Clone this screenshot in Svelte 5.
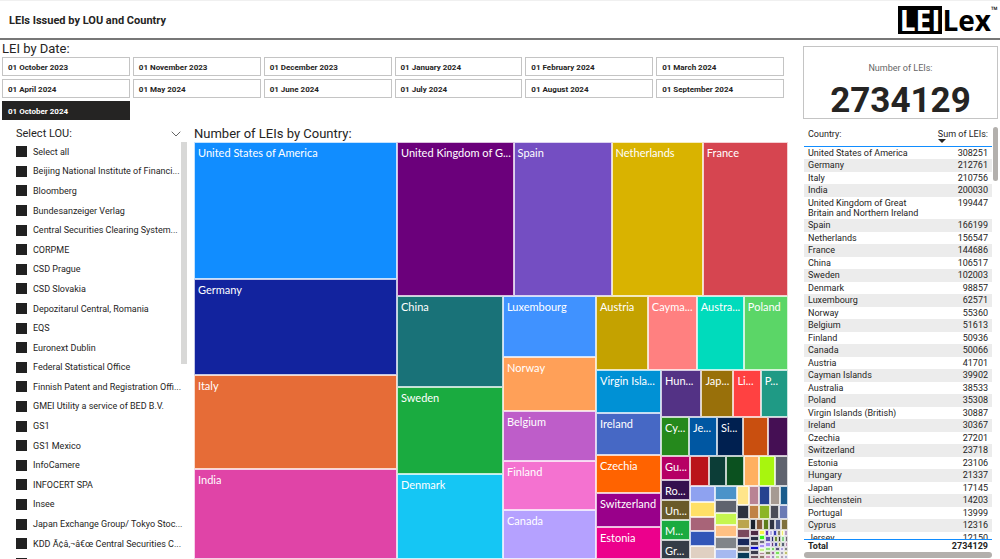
<script>
    const dates = [
        "01 October 2023",
        "01 November 2023",
        "01 December 2023",
        "01 January 2024",
        "01 February 2024",
        "01 March 2024",
        "01 April 2024",
        "01 May 2024",
        "01 June 2024",
        "01 July 2024",
        "01 August 2024",
        "01 September 2024",
        "01 October 2024",
    ];
    let selectedDate = $state("01 October 2024");

    const lous = [
        "Select all",
        "Beijing National Institute of Financi...",
        "Bloomberg",
        "Bundesanzeiger Verlag",
        "Central Securities Clearing System...",
        "CORPME",
        "CSD Prague",
        "CSD Slovakia",
        "Depozitarul Central, Romania",
        "EQS",
        "Euronext Dublin",
        "Federal Statistical Office",
        "Finnish Patent and Registration Offi...",
        "GMEI Utility a service of BED B.V.",
        "GS1",
        "GS1 Mexico",
        "InfoCamere",
        "INFOCERT SPA",
        "Insee",
        "Japan Exchange Group/ Tokyo Stoc...",
        "KDD Ã¢â‚¬â€œ Central Securities C...",
        "",
    ];

    const countries = [
        ["United States of America", 308251],
        ["Germany", 212761],
        ["Italy", 210756],
        ["India", 200030],
        ["United Kingdom of Great Britain and Northern Ireland", 199447],
        ["Spain", 166199],
        ["Netherlands", 156547],
        ["France", 144686],
        ["China", 106517],
        ["Sweden", 102003],
        ["Denmark", 98857],
        ["Luxembourg", 62571],
        ["Norway", 55360],
        ["Belgium", 51613],
        ["Finland", 50936],
        ["Canada", 50066],
        ["Austria", 41701],
        ["Cayman Islands", 39902],
        ["Australia", 38533],
        ["Poland", 35308],
        ["Virgin Islands (British)", 30887],
        ["Ireland", 30367],
        ["Czechia", 27201],
        ["Switzerland", 23718],
        ["Estonia", 23106],
        ["Hungary", 21337],
        ["Japan", 17145],
        ["Liechtenstein", 14203],
        ["Portugal", 13999],
        ["Cyprus", 12316],
        ["Jersey", 12150],
    ];

    // treemap nodes: a tile has a colour, rows and columns have children
    const tile = (size, color, name = "") => ({ size, color, name });
    const row = (size, ...children) => ({ size, dir: "row", children });
    const col = (size, ...children) => ({ size, dir: "column", children });

    // unlabelled strips, written as "size colour" pairs
    const strip = (list) =>
        list.split(", ").map((s) => {
            const [size, color] = s.split(" ");
            return tile(+size, color);
        });

    const smallest = col(
        38,
        row(11, ...strip("6 #1a222e, 7 #855b3a, 6 #5d7e1a, 6 #2e3444, 6 #4b5a87, 7 #80713c")),
        row(
            28,
            col(9, ...strip("6 #4d2b44, 5 #2a3145, 5 #4f4852, 4 #0b0bcf, 4 #3b3b4c, 4 #6d5560")),
            col(6, ...strip("5 #f7f34a, 5 #3cf51c, 4 #6f6a80, 4 #a78cf5, 4 #c3f08a, 3 #b08898, 3 #8f7a6a")),
            col(
                23,
                row(6, ...strip("4 #5a2fb0, 4 #b9b4e8, 4 #3a3fb0, 4 #8f8b6a, 3 #f0ee70, 4 #b09ac0")),
                row(
                    22,
                    col(6, ...strip("6 #5b4fa8, 5 #a58cf0, 4 #92e07a, 4 #7b8a5a, 3 #d09ab8")),
                    col(
                        17,
                        row(5, ...strip("3 #22246a, 3 #6d8a3a, 3 #2c2c34, 3 #8ad08a, 3 #6a6270")),
                        row(5, ...strip("3 #5f3a78, 3 #444c9a, 3 #9a9a4a, 3 #556070, 3 #b088a8")),
                        row(4, ...strip("4 #7ad06a, 4 #5a507a, 4 #b0a0e0, 4 #808080")),
                        row(4, ...strip("4 #9a6a9a, 4 #7ae05a, 4 #a0a0b0, 4 #c0c070")),
                        row(4, ...strip("4 #a090c0, 4 #b0e090, 4 #b0a0b0, 4 #b0b0d0")),
                    ),
                ),
            ),
        ),
    );

    const treemap = row(
        1,
        col(
            203,
            tile(138, "#118dff", "United States of America"),
            tile(95, "#12239e", "Germany"),
            tile(94, "#e66c37", "Italy"),
            tile(90, "#e044a7", "India"),
        ),
        col(
            391,
            row(
                154,
                tile(117, "#6b007b", "United Kingdom of G..."),
                tile(98, "#744ec2", "Spain"),
                tile(91, "#d9b300", "Netherlands"),
                tile(85, "#d64550", "France"),
            ),
            row(
                263,
                col(
                    106,
                    tile(91, "#197278", "China"),
                    tile(87, "#1aab40", "Sweden"),
                    tile(85, "#15c6f4", "Denmark"),
                ),
                col(
                    93,
                    tile(61, "#4092ff", "Luxembourg"),
                    tile(54, "#ffa058", "Norway"),
                    tile(50, "#be5dc9", "Belgium"),
                    tile(49, "#f472d0", "Finland"),
                    tile(49, "#b5a1ff", "Canada"),
                ),
                col(
                    192,
                    row(
                        74,
                        tile(52, "#c4a200", "Austria"),
                        tile(49, "#ff8080", "Cayma..."),
                        tile(47, "#00dbbc", "Austra..."),
                        tile(44, "#5bd667", "Poland"),
                    ),
                    row(
                        189,
                        col(
                            65,
                            tile(43, "#0091d5", "Virgin Isla..."),
                            tile(43, "#4668c5", "Ireland"),
                            tile(38, "#ff6300", "Czechia"),
                            tile(33, "#99008a", "Switzerland"),
                            tile(32, "#ec008c", "Estonia"),
                        ),
                        col(
                            127,
                            row(
                                47,
                                tile(41, "#533285", "Hun..."),
                                tile(32, "#99700a", "Jap..."),
                                tile(27, "#ff4141", "Li..."),
                                tile(27, "#1f9a85", "P..."),
                            ),
                            row(
                                39,
                                tile(28, "#25891c", "Cy..."),
                                tile(28, "#0057a2", "Je..."),
                                tile(26, "#002050", "Si..."),
                                tile(25, "#c94f0f"),
                                tile(19, "#450f54"),
                            ),
                            row(
                                103,
                                col(
                                    29,
                                    tile(24, "#b60064", "Gu..."),
                                    tile(20, "#34124f", "Ro..."),
                                    tile(20, "#6a5a29", "Un..."),
                                    tile(20, "#1aab40", "M..."),
                                    tile(19, "#343c47", "Gr..."),
                                ),
                                col(
                                    98,
                                    row(30, ...strip("19 #ba141a, 18 #0c3d37, 18 #0b511f, 15 #ffb060, 15 #a8f50e, 13 #5f636e")),
                                    row(
                                        73,
                                        col(25, ...strip("16 #8ea2f0, 15 #ffe066, 14 #a86478, 14 #3256b8, 13 #e0d0c2")),
                                        col(22, ...strip("14 #4a93c9, 13 #5f636e, 13 #c5f64f, 12 #ffc083, 11 #808489, 10 #a6b9f0")),
                                        col(
                                            51,
                                            row(19, ...strip("12 #ffe58a, 11 #b98394, 11 #254290, 9 #a69a92, 8 #1a5c8c")),
                                            row(14, ...strip("12 #2b3140, 11 #c08245, 11 #8bb525, 8 #4a4c58, 9 #6b7bb5")),
                                            row(
                                                40,
                                                col(13, ...strip("11 #bba54d, 9 #7a4a5c, 7 #18285a, 6 #6b6259, 6 #083a58")),
                                                smallest,
                                            ),
                                        ),
                                    ),
                                ),
                            ),
                        ),
                    ),
                ),
            ),
        ),
    );
</script>

{#snippet node(n)}
    {#if n.children}
        <div class="split" class:vertical={n.dir === "column"} style="flex-grow: {n.size}">
            {#each n.children as child}
                {@render node(child)}
            {/each}
        </div>
    {:else}
        <div class="tile" style="flex-grow: {n.size}; background-color: {n.color}">{n.name}</div>
    {/if}
{/snippet}

<div class="page">
    <header>
        <h1>LEIs Issued by LOU and Country</h1>
        <div class="logo"><span class="box">LEI</span><span>Lex</span><span class="tm">™</span></div>
    </header>

    <div class="content">
        <main>
            <h2>LEI by Date:</h2>
            <div class="dates">
                {#each dates as date}
                    <button
                        class="date"
                        class:selected={date === selectedDate}
                        aria-pressed={date === selectedDate}
                        onclick={() => (selectedDate = date)}
                    >
                        {date}
                    </button>
                {/each}
            </div>

            <div class="panels">
                <section class="slicer">
                    <div class="slicer-head">
                        <h3>Select LOU:</h3>
                        <button class="chevron" aria-label="Expand">
                            <svg width="10" height="6" viewBox="0 0 10 6">
                                <path d="M0.7 0.7 L5 5 L9.3 0.7" fill="none" stroke="#666" stroke-width="1" />
                            </svg>
                        </button>
                    </div>
                    <div class="lous">
                        {#each lous as lou}
                            <label><input type="checkbox" checked />{lou}</label>
                        {/each}
                        <div class="slicer-scroll"></div>
                    </div>
                </section>

                <section class="chart">
                    <h2>Number of LEIs by Country:</h2>
                    <div class="treemap">
                        {@render node(treemap)}
                    </div>
                </section>
            </div>
        </main>

        <aside>
            <div class="card">
                <p class="card-label">Number of LEIs:</p>
                <p class="card-value">2734129</p>
            </div>
            <div class="table-area">
                <div class="table-view">
                    <table>
                        <thead>
                            <tr>
                                <th>Country:</th>
                                <th class="num sorted">Sum of LEIs:</th>
                            </tr>
                        </thead>
                        <tbody>
                            {#each countries as [name, count]}
                                <tr>
                                    <td>{name}</td>
                                    <td class="num">{count}</td>
                                </tr>
                            {/each}
                        </tbody>
                        <tfoot>
                            <tr>
                                <td>Total</td>
                                <td class="num">2734129</td>
                            </tr>
                        </tfoot>
                    </table>
                </div>
                <div class="scroll-y"></div>
            </div>
            <div class="scroll-x"></div>
        </aside>
    </div>
</div>

<style>
    :global(body) {
        background: #fff;
    }

    .page {
        display: flex;
        flex-direction: column;
        height: 100vh;
        overflow: hidden;
        color: #252423;
        font-family: Roboto, sans-serif;
        font-size: 9px;
    }

    .page * {
        box-sizing: border-box;
    }

    h1,
    h2,
    h3,
    p {
        margin: 0;
        font-weight: normal;
    }

    button {
        font: inherit;
        color: inherit;
        cursor: pointer;
    }

    header {
        display: flex;
        flex: none;
        align-items: center;
        justify-content: space-between;
        height: 40px;
        padding: 0 2px 0 9px;
        border-top: 1px solid #f0f0f0;
        border-bottom: 2px solid #777;
    }

    h1 {
        padding-top: 2px;
        font-size: 11px;
        font-weight: bold;
    }

    .logo {
        display: flex;
        align-items: center;
        color: #000;
        font: bold 28px/28px "Open Sans", sans-serif;
    }

    .logo .box {
        padding: 0 2px;
        background: #000;
        color: #fff;
    }

    .logo .tm {
        align-self: flex-start;
        font-size: 9px;
        line-height: 8px;
    }

    .content {
        display: flex;
        flex: 1;
        min-height: 0;
        gap: 15px;
    }

    main {
        display: flex;
        flex: 1;
        flex-direction: column;
        min-width: 0;
        padding-left: 2px;
    }

    h2 {
        font-size: 13px;
        line-height: 17px;
    }

    .dates {
        display: grid;
        grid-template-columns: repeat(6, 1fr);
        gap: 3px;
        padding-right: 4px;
    }

    .date {
        height: 19px;
        padding: 2px 5px 0;
        border: 1px solid #c4c4c4;
        background: #fff;
        font-size: 8px;
        font-weight: bold;
        text-align: left;
    }

    .date.selected {
        border-color: #252423;
        background: #252423;
        color: #fff;
    }

    .panels {
        display: flex;
        flex: 1;
        min-height: 0;
        padding-top: 5px;
    }

    .slicer {
        display: flex;
        flex: none;
        flex-direction: column;
        width: 192px;
        padding: 0 7px 0 14px;
    }

    .slicer-head {
        display: flex;
        align-items: center;
        justify-content: space-between;
        height: 17px;
        padding-right: 6px;
    }

    h3 {
        font-size: 11px;
    }

    .chevron {
        display: flex;
        padding: 0;
        border: 0;
        background: none;
    }

    /* the last row runs past the bottom edge */
    .lous {
        position: relative;
        display: grid;
        flex: 1;
        grid-template-rows: repeat(22, 1fr);
        margin-bottom: -14px;
    }

    label {
        display: flex;
        align-items: center;
        gap: 6px;
        white-space: nowrap;
    }

    input {
        flex: none;
        width: 11px;
        height: 11px;
        margin: 0;
        appearance: none;
        background: #212121;
    }

    .slicer-scroll {
        position: absolute;
        top: 0;
        right: 0;
        width: 6px;
        height: 222px;
        background: rgba(190, 190, 188, 0.6);
    }

    .chart {
        display: flex;
        flex: 1;
        flex-direction: column;
        min-width: 0;
    }

    .treemap {
        display: flex;
        flex: 1;
        min-height: 0;
    }

    .split {
        display: flex;
        flex-basis: 0;
        min-width: 0;
        min-height: 0;
    }

    .split.vertical {
        flex-direction: column;
    }

    .tile {
        flex-basis: 0;
        min-width: 0;
        min-height: 0;
        overflow: hidden;
        border: 1px solid rgba(255, 255, 255, 0.75);
        color: #fff;
        font: 11px/19px Lato, sans-serif;
        text-indent: 3px;
        white-space: nowrap;
    }

    aside {
        display: flex;
        flex: none;
        flex-direction: column;
        width: 197px;
        padding: 6px 2px 1px 0;
    }

    .card {
        flex: none;
        height: 73px;
        padding-top: 14px;
        border: 1px solid #c4c4c4;
        text-align: center;
    }

    .card-label {
        color: #666;
        line-height: 14px;
    }

    .card-value {
        font-size: 35px;
        font-weight: bold;
        line-height: 52px;
    }

    .table-area {
        display: flex;
        flex: 1;
        min-height: 0;
        gap: 1px;
        padding: 6px 0 0 1px;
    }

    .table-view {
        flex: 1;
        overflow: hidden;
    }

    table {
        width: 100%;
        border-collapse: separate;
        border-spacing: 0;
        line-height: 10px;
    }

    th,
    td {
        padding: 1px 4px;
        text-align: left;
        vertical-align: top;
    }

    th {
        height: 22px;
        padding-top: 4px;
        border-bottom: 1px solid #118dff;
        font-weight: normal;
        white-space: nowrap;
    }

    .num {
        text-align: right;
    }

    .sorted::after {
        content: "";
        display: block;
        width: 0;
        border: 4px solid transparent;
        border-top-color: #252423;
        border-bottom: 0;
    }

    tbody tr:nth-child(even) td {
        padding-bottom: 2px;
        background: #ececec;
    }

    tfoot td {
        position: sticky;
        bottom: 0;
        border-top: 1px solid #118dff;
        background: #fff;
        font-weight: bold;
    }

    .scroll-y {
        width: 5px;
        height: 54px;
        margin-top: 2px;
        border-radius: 3px;
        background: #b3b0ad;
    }

    .scroll-x {
        flex: none;
        height: 6px;
        margin: 0 6px 0 1px;
        border-radius: 3px;
        background: #b3b0ad;
    }
</style>
